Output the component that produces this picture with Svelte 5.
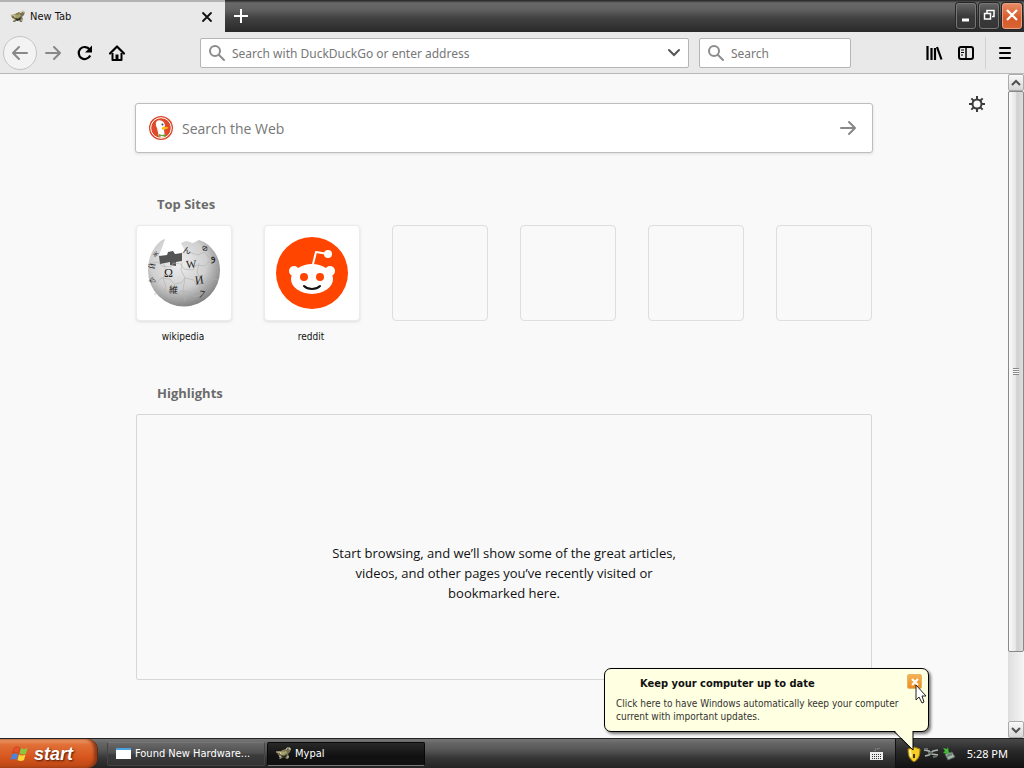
<script>
    const sites = [
        { name: "wikipedia", icon: "wikipedia" },
        { name: "reddit", icon: "reddit" },
        null,
        null,
        null,
        null
    ];

    const teeth = [0, 45, 90, 135, 180, 225, 270, 315];

    // letters on the puzzle globe: x, y, size, rotation
    const glyphs = [
        { t: "Ω", x: 18, y: 42, s: 12, r: 0 },
        { t: "W", x: 40, y: 33, s: 11, r: -4 },
        { t: "И", x: 49, y: 49, s: 12, r: -8 },
        { t: "維", x: 23, y: 58, s: 9, r: 4 },
        { t: "7", x: 53, y: 63, s: 11, r: 14 },
        { t: "و", x: 64, y: 25, s: 11, r: -20 },
        { t: "Й", x: 3, y: 34, s: 8, r: -80 },
        { t: "ש", x: 4, y: 48, s: 8, r: 50 },
        { t: "ん", x: 37, y: 18, s: 8, r: 10 },
        { t: "Ф", x: 56, y: 16, s: 8, r: 50 },
        { t: "ж", x: 6, y: 21, s: 8, r: -40 }
    ];

    let address = "";
    let query = "";
    let webQuery = "";
    let showBalloon = true;
</script>

{#snippet mascot()}
    <svg class="mascot" viewBox="0 0 16 16" aria-hidden="true">
        <path d="M1 6l4-1 4-2 2 1 2-2 2 1-1 3-2 2 1 2-1 3h-2l-1-2-3 1-1 1H3l1-3-2-1z" fill="#77745a" />
        <path d="M4 6l3-2 3 1 1 2-3 2H5z" fill="#a3a36c" />
        <path d="M5 9l3 1 3-2-1 3-3 1z" fill="#272b1c" />
        <path d="M0 6h4l1 2M10 4l1-2h3v2M3 10l2 1M11 11h2" stroke="#ddd6b4" fill="none" />
        <path d="M2 8h2M6 5h3M12 5h1" stroke="#8c6432" />
    </svg>
{/snippet}

{#snippet magnifier()}
    <svg class="magnifier" width="18" height="18" viewBox="0 0 18 18" aria-hidden="true">
        <circle cx="7" cy="7" r="5" fill="none" stroke="#8c8c8c" stroke-width="2" />
        <path d="M11 11l5 5" stroke="#8c8c8c" stroke-width="2" stroke-linecap="round" />
    </svg>
{/snippet}

<div class="desktop">
    <header class="titlebar">
        <div class="tab">
            {@render mascot()}
            <span class="tab-title">New Tab</span>
            <button class="plain tab-close" aria-label="Close tab">
                <svg width="12" height="12" viewBox="0 0 12 12"><path d="M2 2l8 8M10 2l-8 8" stroke="#111" stroke-width="1.800" stroke-linecap="round" /></svg>
            </button>
        </div>
        <button class="plain new-tab" aria-label="New tab">
            <svg width="14" height="14" viewBox="0 0 14 14"><path d="M7 0v14M0 7h14" stroke="#fff" stroke-width="2" /></svg>
        </button>
        <div class="window-buttons">
            <button class="win" aria-label="Minimize">
                <svg width="16" height="20" viewBox="0 0 16 20"><path d="M4 14h7" stroke="#fff" stroke-width="3" /></svg>
            </button>
            <button class="win" aria-label="Restore">
                <svg width="16" height="20" viewBox="0 0 16 20"><path d="M6 7V4.500h7v6h-2M3.500 7.500h6v5.500h-6z" stroke="#fff" stroke-width="1.500" fill="none" /></svg>
            </button>
            <button class="win win-close" aria-label="Close">
                <svg width="16" height="20" viewBox="0 0 16 20"><path d="M3 4l10 10M13 4L3 14" stroke="#fff" stroke-width="2.200" /></svg>
            </button>
        </div>
    </header>

    <nav class="toolbar">
        <button class="plain back" aria-label="Back">
            <svg width="18" height="18" viewBox="0 0 18 18"><path d="M8 3L2 9l6 6M3 9h13" class="stroke-grey" /></svg>
        </button>
        <button class="plain tool" aria-label="Forward">
            <svg width="18" height="18" viewBox="0 0 18 18"><path d="M10 3l6 6-6 6M15 9H2" class="stroke-grey" /></svg>
        </button>
        <button class="plain tool" aria-label="Reload">
            <svg width="18" height="18" viewBox="0 0 18 18">
                <path d="M14.200 11.500a6 6 0 1 1-.6-6" fill="none" stroke="#000" stroke-width="2.200" />
                <path d="M16 1.500v7H9z" />
            </svg>
        </button>
        <button class="plain tool" aria-label="Home">
            <svg width="18" height="18" viewBox="0 0 18 18">
                <path d="M2 9.500L9 2.500l7 7" fill="none" stroke="#000" stroke-width="2.200" stroke-linecap="round" stroke-linejoin="round" />
                <path d="M4.500 9v7h9V9" fill="none" stroke="#000" stroke-width="2" stroke-linejoin="round" />
                <path d="M7.500 16v-5.500h3V16z" />
            </svg>
        </button>
        <label class="field address">
            {@render magnifier()}
            <input type="text" bind:value={address} placeholder="Search with DuckDuckGo or enter address" aria-label="Address" />
            <svg width="14" height="10" viewBox="0 0 14 10" aria-hidden="true"><path d="M2 2l5 5 5-5" fill="none" stroke="#555" stroke-width="2" stroke-linecap="round" /></svg>
        </label>
        <label class="field search">
            {@render magnifier()}
            <input type="text" bind:value={query} placeholder="Search" aria-label="Search" />
        </label>
        <div class="tools-right">
            <button class="plain tool" aria-label="Library">
                <svg width="18" height="18" viewBox="0 0 18 18"><path d="M2.500 2v14M6.500 4v12M10 4v12M12 3l4.500 12.500" stroke="#000" stroke-width="2.200" /></svg>
            </button>
            <button class="plain tool" aria-label="Sidebars">
                <svg width="18" height="18" viewBox="0 0 18 18">
                    <rect x="2" y="3" width="14" height="12" rx="2" fill="none" stroke="#000" stroke-width="2" />
                    <path d="M9 3v12" stroke="#000" stroke-width="1.500" />
                    <path d="M4 6h3M4 8.500h3M4 11h2" stroke="#000" />
                </svg>
            </button>
            <button class="plain tool menu" aria-label="Menu">
                <svg width="18" height="18" viewBox="0 0 18 18"><path d="M5 4h10M5 9h10M5 14h10" stroke="#000" stroke-width="2" stroke-linecap="round" /></svg>
            </button>
        </div>
    </nav>

    <div class="viewport">
        <main>
            <button class="plain settings" aria-label="Settings">
                <svg width="18" height="18" viewBox="-9 -9 18 18">
                    <circle r="4.500" fill="none" stroke="#3b3b3b" stroke-width="2" />
                    {#each teeth as angle}
                        <path d="M0-4.800V-8" stroke="#3b3b3b" stroke-width="2" transform="rotate({angle})" />
                    {/each}
                </svg>
            </button>

            <form class="web-search">
                <svg width="24" height="24" viewBox="0 0 24 24" aria-hidden="true">
                    <circle cx="12" cy="12" r="12" fill="#d9472b" />
                    <circle cx="12" cy="12" r="10.300" fill="#df4a2a" stroke="#fff" />
                    <path d="M8 5c2-1.500 7-.5 8 4l-1 5 1 7c-2 1-4 1-6 0L8 12c-1-2-2-5 0-7z" fill="#fff" />
                    <circle cx="13.500" cy="8.500" r="1" fill="#345" />
                    <path d="M12.500 12c2-2 4-1 7-.5-1 1.500-3 1.800-6 2.300z" fill="#f6bd16" />
                    <path d="M10 18l3 1 4-1-1 3-3-1-3 1z" fill="#69a436" />
                </svg>
                <input type="text" bind:value={webQuery} placeholder="Search the Web" aria-label="Search the Web" />
                <button type="button" class="plain" aria-label="Submit">
                    <svg width="18" height="18" viewBox="0 0 18 18"><path d="M10 3l6 6-6 6M15 9H2" class="stroke-grey" /></svg>
                </button>
            </form>

            <section>
                <h2>Top Sites</h2>
                <ul class="sites">
                    {#each sites as site}
                        <li>
                            {#if site}
                                <a href="#{site.name}">
                                    <span class="tile">
                                        {#if site.icon == "wikipedia"}
                                            <svg width="76" height="76" viewBox="0 0 76 76" aria-hidden="true">
                                                <defs>
                                                    <radialGradient id="globe" cx="42%" cy="35%" r="65%">
                                                        <stop offset="0" stop-color="#f0f0f0" />
                                                        <stop offset="0.600" stop-color="#cfcfcf" />
                                                        <stop offset="1" stop-color="#858585" />
                                                    </radialGradient>
                                                </defs>
                                                <path d="M16 5l3-1-3 9-3 7 6 4 9-1 4-4 7-3-4-8 5-2 7 2 6-3 5 2c10 6 16 16 16 28a36 36 0 0 1-72 1C2 22 7 12 16 5z" fill="url(#globe)" />
                                                <path d="M13 21l8-1 1-3 5-1 2 3 7-1 0 8-6 1 0 4-6-1 0-3-10 2z" fill="#555" />
                                                <path d="M3 29l9-2 4 4 9 1 2-4 8 1 3 5 9 1 3-5 9 1 5-5 7 2M2 46l9 2 4-5 9 1 4 5 7-1 4-5 9 2 3 5 8-2 5-5 8 2M8 59l10-1 4 4 9-1 4-5 9 1 4 5 9-3M18 29l2 8-3 6 3 9-2 6M36 27l-1 8 4 8-2 12 2 11M53 28l-2 9 4 8-3 12M43 17l9 3 6-3 6 6" fill="none" stroke="#b0b0b0" stroke-width="0.600" />
                                                {#each glyphs as g}
                                                    <text x={g.x} y={g.y} font-size={g.s} transform="rotate({g.r} {g.x + 3} {g.y - 3})">{g.t}</text>
                                                {/each}
                                            </svg>
                                        {:else}
                                            <svg width="72" height="72" viewBox="0 0 72 72" aria-hidden="true">
                                                <circle cx="36" cy="36" r="36" fill="#ff4500" />
                                                <path d="M37 27l3-12 12 2" fill="none" stroke="#fff" stroke-width="2" stroke-linejoin="round" />
                                                <circle cx="52" cy="17" r="4" fill="#fff" />
                                                <circle cx="18" cy="34" r="5" fill="#fff" />
                                                <circle cx="54" cy="34" r="5" fill="#fff" />
                                                <ellipse cx="36" cy="42" rx="21" ry="15" fill="#fff" />
                                                <circle cx="28" cy="40" r="4" fill="#ff4500" />
                                                <circle cx="44" cy="40" r="4" fill="#ff4500" />
                                                <path d="M28 49c4 4 12 4 16 0" fill="none" stroke="#111" stroke-width="2" stroke-linecap="round" />
                                            </svg>
                                        {/if}
                                    </span>
                                    <span class="site-name">{site.name}</span>
                                </a>
                            {:else}
                                <span class="tile empty"></span>
                            {/if}
                        </li>
                    {/each}
                </ul>
            </section>

            <section class="highlights">
                <h2>Highlights</h2>
                <div class="highlights-box">
                    <p>Start browsing, and we’ll show some of the great articles, videos, and other pages you’ve recently visited or bookmarked here.</p>
                </div>
            </section>
        </main>

        <div class="scrollbar">
            <button class="scroll-button" aria-label="Scroll up">
                <svg width="10" height="8" viewBox="0 0 10 8"><path d="M1 6l4-4 4 4" fill="none" stroke="#505050" stroke-width="2" /></svg>
            </button>
            <div class="track">
                <div class="thumb"><i></i></div>
            </div>
            <button class="scroll-button" aria-label="Scroll down">
                <svg width="10" height="8" viewBox="0 0 10 8"><path d="M1 2l4 4 4-4" fill="none" stroke="#505050" stroke-width="2" /></svg>
            </button>
        </div>
    </div>

    <footer class="taskbar">
        <button class="start">
            <svg width="20" height="18" viewBox="0 0 20 18" aria-hidden="true">
                <path d="M4 3c2-1.500 4-1.500 6 0L8.500 8.500c-2-1.500-4-1.500-6 0z" fill="#e8502a" stroke="#a83b18" stroke-width="0.500" />
                <path d="M11 3c2 1.200 4 1.200 6.500 0L16 8.500c-2 1.300-4.500 1.300-6.500 0z" fill="#8cc63e" />
                <path d="M2 9.500c2-1.500 4-1.500 6 0L6.500 15c-2-1.500-4-1.500-6 0z" fill="#4b83dd" />
                <path d="M9 9.500c2 1.200 4.500 1.200 6.500 0L14 15c-2 1.300-4.500 1.300-6.500 0z" fill="#fad53a" />
            </svg>
            <span>start</span>
        </button>
        <button class="task">
            <svg width="16" height="16" viewBox="0 0 16 16" aria-hidden="true">
                <rect x="0" y="2" width="15" height="11" fill="#fff" />
                <path d="M0 3h15" stroke="#4ba3df" stroke-width="2" />
            </svg>
            <span>Found New Hardware...</span>
        </button>
        <button class="task active">
            {@render mascot()}
            <span>Mypal</span>
        </button>
        <div class="keyboard">
            <svg width="14" height="14" viewBox="0 0 14 14" aria-hidden="true">
                <path d="M5 4V2h4V0" stroke="#999" fill="none" stroke-dasharray="1 1" />
                <rect x="0" y="5" width="13" height="8" fill="#eee" />
                <path d="M2 7.500h10M2 9.500h10M2 11.500h10" stroke="#333" stroke-dasharray="1 1" />
            </svg>
        </div>
        <div class="tray">
            <svg width="14" height="16" viewBox="0 0 14 16" aria-hidden="true">
                <path d="M1 3l6-2 6 2c0 6-1 10-6 13C2 13 1 9 1 3z" fill="#f4ce24" stroke="#98720d" />
                <path d="M7 8v4" stroke="#463200" stroke-width="2" />
                <path d="M3 4l1 7" stroke="#fff39d" stroke-width="2" />
            </svg>
            <svg width="16" height="16" viewBox="0 0 16 16" aria-hidden="true">
                <path d="M1 4l5 1 3 3 6 1M2 10l4-1 4-4 5-1" stroke="#aeb5b1" stroke-width="1.500" fill="none" />
                <path d="M1 3h4M10 11l4-1M5 7h5" stroke="#647069" stroke-width="2" />
            </svg>
            <svg width="16" height="16" viewBox="0 0 16 16" aria-hidden="true">
                <path d="M4 8l7-2 3 5-7 3z" fill="#a9b5ad" stroke="#52655a" />
                <path d="M6 10l5-2" stroke="#657c6d" stroke-width="2" />
                <path d="M2 2l4 1 1-2 1 7-6-1 2-2z" fill="#44bc38" />
            </svg>
            <time>5:28 PM</time>
        </div>
    </footer>

    {#if showBalloon}
        <aside class="balloon">
            <h3>Keep your computer up to date</h3>
            <p>Click here to have Windows automatically keep your computer current with important updates.</p>
            <button class="balloon-close" aria-label="Close notification" on:click={() => (showBalloon = false)}>
                <svg width="10" height="10" viewBox="0 0 10 10"><path d="M2 2l6 6M8 2L2 8" stroke="#fff" stroke-width="2" /></svg>
            </button>
            <svg class="tail" width="22" height="21" viewBox="0 0 22 21" aria-hidden="true">
                <path d="M1 0v1l18 19V0z" fill="#ffffe1" />
                <path d="M0 1.500l19 18.500V1" fill="none" stroke="#000" />
            </svg>
            <svg class="cursor" width="13" height="21" viewBox="0 0 13 21" aria-hidden="true">
                <path d="M1 1v15l3-3 3 6 2-1-2-6h4z" fill="#fff" stroke="#222" />
            </svg>
        </aside>
    {/if}
</div>

<style>
    :global(body) {
        margin: 0;
    }
    .desktop {
        position: relative;
        display: flex;
        flex-direction: column;
        min-height: 100vh;
        background: #f9f9f9;
        color: #111;
        font: 11px/16px "DejaVu Sans Condensed", "Noto Sans", sans-serif;
    }
    svg {
        display: block;
        flex: none;
    }
    button,
    input {
        font: inherit;
        color: inherit;
    }
    .plain {
        display: flex;
        align-items: center;
        justify-content: center;
        padding: 0;
        border: 0;
        background: none;
    }
    .mascot {
        width: 16px;
        height: 16px;
    }
    .stroke-grey {
        fill: none;
        stroke: #888;
        stroke-width: 2;
        stroke-linecap: round;
        stroke-linejoin: round;
    }

    /* title bar */
    .titlebar {
        display: flex;
        height: 32px;
        background: linear-gradient(#222 0, #696969 3px, #606060 10px, #414141 18px, #292929 32px);
    }
    .tab {
        display: flex;
        align-items: center;
        gap: 4px;
        box-sizing: border-box;
        width: 225px;
        padding: 0 10px;
        border-top: 2px solid #b3b3b3;
        background: #e9e9e9;
    }
    .tab-title {
        flex: 1;
    }
    .tab-close {
        width: 16px;
        height: 16px;
    }
    .new-tab {
        width: 32px;
    }
    .window-buttons {
        display: flex;
        gap: 3px;
        margin-left: auto;
        padding: 3px 2px 3px 0;
    }
    .win {
        display: flex;
        align-items: center;
        justify-content: center;
        width: 20px;
        padding: 0;
        border: 1px solid #777;
        border-radius: 3px;
        background: linear-gradient(#646464, #3b3b3b 50%, #353535);
        box-shadow: 0 0 0 1px #262626;
    }
    .win-close {
        border-color: #eaa180;
        background: linear-gradient(#e58b65, #d65a2b 60%, #d96433);
    }

    /* toolbar */
    .toolbar {
        display: flex;
        align-items: center;
        box-sizing: border-box;
        height: 42px;
        padding: 0 3px;
        border-bottom: 1px solid #b8b8b8;
        background: #e9e9e9;
    }
    .back {
        box-sizing: border-box;
        width: 34px;
        height: 34px;
        border: 1px solid #c4c4c4;
        border-radius: 50%;
        background: #f3f3f3;
    }
    .tool {
        width: 32px;
        height: 32px;
    }
    .field {
        display: flex;
        align-items: center;
        gap: 6px;
        box-sizing: border-box;
        height: 30px;
        padding: 0 7px;
        border: 1px solid #b5b5b5;
        border-radius: 2px;
        background: #fff;
        font-family: "Noto Sans", sans-serif;
        font-size: 12px;
    }
    .field input,
    .web-search input {
        flex: 1;
        min-width: 0;
        padding: 2px 0 0;
        border: 0;
        outline: 0;
        background: none;
    }
    input::placeholder {
        color: #777;
        opacity: 1;
    }
    .address {
        flex: 1;
        margin-left: 67px;
    }
    .search {
        width: 152px;
        margin-left: 10px;
    }
    .tools-right {
        display: flex;
        margin-left: 67px;
    }
    .menu {
        margin-left: 3px;
        border-left: 1px solid #d2d2d2;
        width: 36px;
    }

    /* new tab page */
    .viewport {
        flex: 1;
        display: flex;
    }
    main {
        position: relative;
        flex: 1;
        padding: 29px 24px 58px;
        font-family: "Open Sans", "Noto Sans", sans-serif;
    }
    .settings {
        position: absolute;
        top: 21px;
        right: 22px;
    }
    .web-search {
        display: flex;
        align-items: center;
        gap: 9px;
        box-sizing: border-box;
        max-width: 738px;
        height: 50px;
        margin: 0 auto;
        padding: 0 15px 0 13px;
        border: 1px solid #bdbdbd;
        border-radius: 3px;
        background: #fff;
        box-shadow: 0 1px 3px #ddd;
        font-size: 14px;
    }
    section {
        max-width: 736px;
        margin: 40px auto 0;
    }
    h2 {
        margin: 0 0 10px;
        padding-left: 21px;
        color: #6b6b6b;
        font-size: 13px;
        line-height: 22px;
    }
    .sites {
        display: grid;
        grid-template-columns: repeat(6, 96px);
        gap: 32px;
        margin: 0;
        padding: 0;
        list-style: none;
    }
    .sites a {
        display: block;
        color: #111;
        text-decoration: none;
    }
    .tile {
        display: flex;
        align-items: center;
        justify-content: center;
        box-sizing: border-box;
        height: 96px;
        border: 1px solid #ececec;
        border-radius: 4px;
        background: #fff;
        box-shadow: 0 1px 3px #ddd;
    }
    .empty {
        border-color: #dedede;
        background: none;
        box-shadow: none;
    }
    .tile text {
        font-family: "Liberation Serif", "Noto Sans CJK JP", serif;
        fill: #222;
    }
    .site-name {
        display: block;
        padding: 8px 2px 0 0;
        font: 10px/16px "DejaVu Sans Condensed", sans-serif;
        text-align: center;
    }
    .highlights {
        margin-top: 37px;
    }
    .highlights-box {
        display: flex;
        align-items: center;
        justify-content: center;
        box-sizing: border-box;
        min-height: 266px;
        padding-top: 52px;
        border: 1px solid #d7d7d7;
        border-radius: 2px;
    }
    .highlights-box p {
        width: 350px;
        margin: 0;
        font-size: 13px;
        line-height: 20px;
        text-align: center;
    }

    /* scrollbar */
    .scrollbar {
        display: flex;
        flex-direction: column;
        width: 16px;
        background: #ededed;
    }
    .scroll-button {
        display: flex;
        align-items: center;
        justify-content: center;
        height: 17px;
        padding: 0;
        border: 1px solid #aaa;
        border-radius: 2px;
        background: linear-gradient(#fafafa, #d6d6d6);
    }
    .track {
        flex: 1;
        background: linear-gradient(90deg, #dedede, #f5f5f5);
    }
    .thumb {
        display: flex;
        align-items: center;
        justify-content: center;
        box-sizing: border-box;
        height: 89%;
        border: 1px solid #888;
        border-radius: 2px;
        background: linear-gradient(90deg, #fafafa, #e5e5e5 50%, #cfcfcf 55%, #dedede);
    }
    .thumb i {
        width: 6px;
        height: 7px;
        background: repeating-linear-gradient(#888 0 1px, #fafafa 1px 2px);
    }

    /* taskbar */
    .taskbar {
        display: flex;
        box-sizing: border-box;
        height: 30px;
        border-top: 1px solid #222;
        background: linear-gradient(#777 0, #666 4px, #565656 11px, #363636 19px, #242424);
        color: #fff;
    }
    .start {
        display: flex;
        align-items: center;
        gap: 4px;
        width: 98px;
        padding: 0 0 0 10px;
        border: 0;
        border-right: 1px solid #5a2a13;
        border-radius: 0 10px 10px 0;
        background: linear-gradient(#f0a070, #e06f36 20%, #d6541c 65%, #b84716);
        box-shadow: inset -3px 0 3px #8c3a18;
        color: #fff;
        font: italic bold 18px/22px "Liberation Sans", sans-serif;
        text-shadow: 1px 1px 2px #481b0b;
    }
    .task {
        display: flex;
        align-items: center;
        gap: 3px;
        width: 158px;
        margin: 3px 0 2px 9px;
        padding: 0 8px;
        border: 1px solid #444;
        border-top-color: #777;
        border-radius: 2px;
        background: linear-gradient(#686868, #505050 45%, #3b3b3b 55%, #333);
        color: #fff;
        white-space: nowrap;
    }
    .task.active {
        margin-left: 2px;
        border-color: #080808;
        border-bottom-color: #777;
        background: linear-gradient(#282828, #111 60%);
    }
    .keyboard {
        display: flex;
        align-items: center;
        margin-left: auto;
        padding-right: 11px;
    }
    .tray {
        display: flex;
        align-items: center;
        gap: 2px;
        padding: 0 16px 0 11px;
        border-left: 1px solid #111;
        background: linear-gradient(#494949, #292929 40%, #111);
    }
    .tray time {
        padding-left: 8px;
        font-family: "Noto Sans", sans-serif;
    }

    /* balloon tip */
    .balloon {
        position: absolute;
        right: 95px;
        bottom: 36px;
        box-sizing: border-box;
        width: 325px;
        height: 64px;
        padding: 7px 11px 6px;
        border: 1px solid #000;
        border-radius: 7px;
        background: #ffffe1;
        box-shadow: 2px 2px 3px #777;
    }
    .balloon h3 {
        margin: 0 0 5px;
        padding-left: 24px;
        font-size: 11px;
        line-height: 16px;
    }
    .balloon p {
        margin: 0;
        color: #333;
        font-size: 10px;
        line-height: 13px;
    }
    .balloon-close {
        position: absolute;
        top: 5px;
        right: 6px;
        display: flex;
        align-items: center;
        justify-content: center;
        width: 15px;
        height: 15px;
        padding: 0;
        border: 1px solid #e8b568;
        border-radius: 2px;
        background: linear-gradient(#f6b253, #ed8b22);
    }
    .tail {
        position: absolute;
        right: 12px;
        top: 61px;
    }
    .cursor {
        position: absolute;
        right: 0;
        top: 15px;
    }
</style>
